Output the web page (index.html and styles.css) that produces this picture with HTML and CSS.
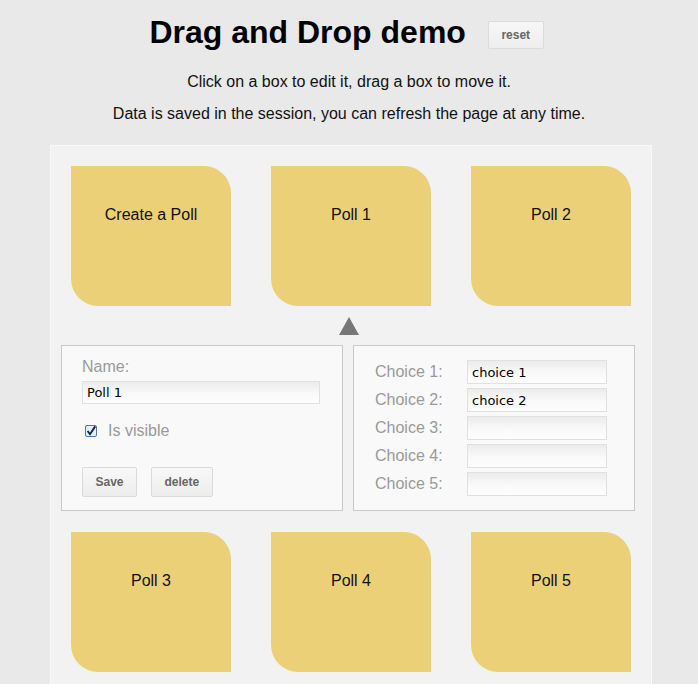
FILE: index.html
```html
<!DOCTYPE html>
<html lang="en">
<head>
<meta charset="utf-8">
<title>Drag and Drop demo</title>
<link rel="stylesheet" href="styles.css">
</head>
<body>
<header class="header">
  <div class="title-row">
    <h1 class="title">Drag and Drop demo</h1>
    <button class="btn btn-reset" type="button">reset</button>
  </div>
  <p class="intro">Click on a box to edit it, drag a box to move it.</p>
  <p class="intro intro-second">Data is saved in the session, you can refresh the page at any time.</p>
</header>
<main class="board">
  <div class="row">
    <div class="box">Create a Poll</div>
    <div class="box">Poll 1</div>
    <div class="box">Poll 2</div>
  </div>
  <div class="editor">
    <svg class="pointer" width="20" height="18" viewBox="0 0 20 18"><polygon points="10,0 20,18 0,18" fill="#777777"/></svg>
    <div class="panels">
      <form class="panel panel-main">
        <label class="field-label" for="name">Name:</label>
        <input class="text-input name-input" id="name" type="text" value="Poll 1">
        <label class="check-row">
          <svg class="checkbox" width="12" height="12" viewBox="0 0 12 12">
            <rect x="0.5" y="0.5" width="11" height="11" rx="1.5" fill="#e6eefa" stroke="#5677ad"/>
            <path d="M2.6 6 L5 9.2 L10.2 1.4" fill="none" stroke="#1a2238" stroke-width="1.9"/>
          </svg>
          <span class="check-text">Is visible</span>
        </label>
        <div class="actions">
          <button class="btn" type="button">Save</button>
          <button class="btn" type="button">delete</button>
        </div>
      </form>
      <div class="panel panel-choices">
        <div class="choice-row"><span class="choice-label">Choice 1:</span><input class="text-input choice-input" type="text" value="choice 1"></div>
        <div class="choice-row"><span class="choice-label">Choice 2:</span><input class="text-input choice-input" type="text" value="choice 2"></div>
        <div class="choice-row"><span class="choice-label">Choice 3:</span><input class="text-input choice-input" type="text" value=""></div>
        <div class="choice-row"><span class="choice-label">Choice 4:</span><input class="text-input choice-input" type="text" value=""></div>
        <div class="choice-row"><span class="choice-label">Choice 5:</span><input class="text-input choice-input" type="text" value=""></div>
      </div>
    </div>
  </div>
  <div class="row">
    <div class="box">Poll 3</div>
    <div class="box">Poll 4</div>
    <div class="box">Poll 5</div>
  </div>
</main>
</body>
</html>
```
FILE: styles.css
```css
* { box-sizing: border-box; }

html, body {
  margin: 0;
  padding: 0;
}

body {
  background: #e9e9e9;
  font-family: "Liberation Sans", Arial, Helvetica, sans-serif;
  font-size: 16px;
  color: #111;
}

.header {
  padding-top: 14px;
  text-align: center;
}

.title-row {
  display: flex;
  justify-content: center;
  align-items: flex-start;
  gap: 22px;
  padding-right: 5px;
}

.title {
  margin: 0;
  font-size: 32px;
  line-height: 37px;
  font-weight: bold;
  color: #000;
}

.btn {
  font-family: "Liberation Sans", Arial, Helvetica, sans-serif;
  font-size: 12px;
  font-weight: bold;
  color: #666;
  height: 30px;
  padding: 0 12.5px;
  border: 1px solid #dadada;
  border-radius: 2px;
  background: linear-gradient(to bottom, #f8f8f8, #ededed);
  cursor: pointer;
}

.btn-reset {
  margin-top: 7px;
  height: 28px;
  padding: 0 12.5px;
  border-color: #dcdcdc;
  background: linear-gradient(to bottom, #f7f7f7, #eeeeee);
}

.intro {
  margin: 22px 0 0;
  line-height: 18px;
}

.intro-second {
  margin-top: 14px;
}

.board {
  margin: 22px 0 0 50px;
  width: 602px;
  min-height: 600px;
  padding: 20px;
  background: #f2f2f2;
  border: 1px solid #f8f8f8;
  border-bottom: none;
}

.row {
  display: flex;
  gap: 40px;
}

.box {
  width: 160px;
  height: 140px;
  padding-top: 39px;
  line-height: 20px;
  text-align: center;
  color: #111;
  background: #ecd078;
  border-radius: 0 27px 0 27px;
}

.editor {
  margin-top: 11px;
  margin-bottom: 21px;
}

.pointer {
  display: block;
  margin-left: 268px;
}

.panels {
  display: flex;
  gap: 10px;
  margin-top: 10px;
  margin-left: -10px;
  margin-right: -4px;
}

.panel {
  flex: none;
  width: 282px;
  height: 166px;
  margin: 0;
  background: #f9f9f9;
  border: 1px solid #c9c9c9;
}

.panel-main {
  padding: 11px 20px 0;
}

.field-label {
  display: block;
  line-height: 20px;
  color: #999;
}

.text-input {
  display: block;
  height: 23px;
  padding: 0 4px;
  font-family: "DejaVu Sans", Verdana, sans-serif;
  font-size: 13px;
  color: #000;
  border: 1px solid #e0e0e0;
  border-radius: 0;
  background: linear-gradient(to bottom, #ececec, #fafafa 60%, #fdfdfd);
  outline: none;
}

.name-input {
  width: 238px;
  margin-top: 4px;
}

.check-row {
  display: flex;
  align-items: center;
  gap: 11px;
  height: 20px;
  margin-top: 17px;
  padding-left: 3px;
  color: #999;
  line-height: 20px;
}

.checkbox {
  display: block;
  flex: none;
}

.actions {
  display: flex;
  gap: 14px;
  margin-top: 26px;
}

.panel-choices {
  padding: 14px 0 0 21px;
  display: flex;
  flex-direction: column;
  gap: 4px;
}

.choice-row {
  display: flex;
  align-items: center;
  height: 24px;
}

.choice-label {
  width: 92px;
  flex: none;
  color: #999;
  line-height: 20px;
}

.choice-input {
  width: 140px;
  height: 24px;
}
```
